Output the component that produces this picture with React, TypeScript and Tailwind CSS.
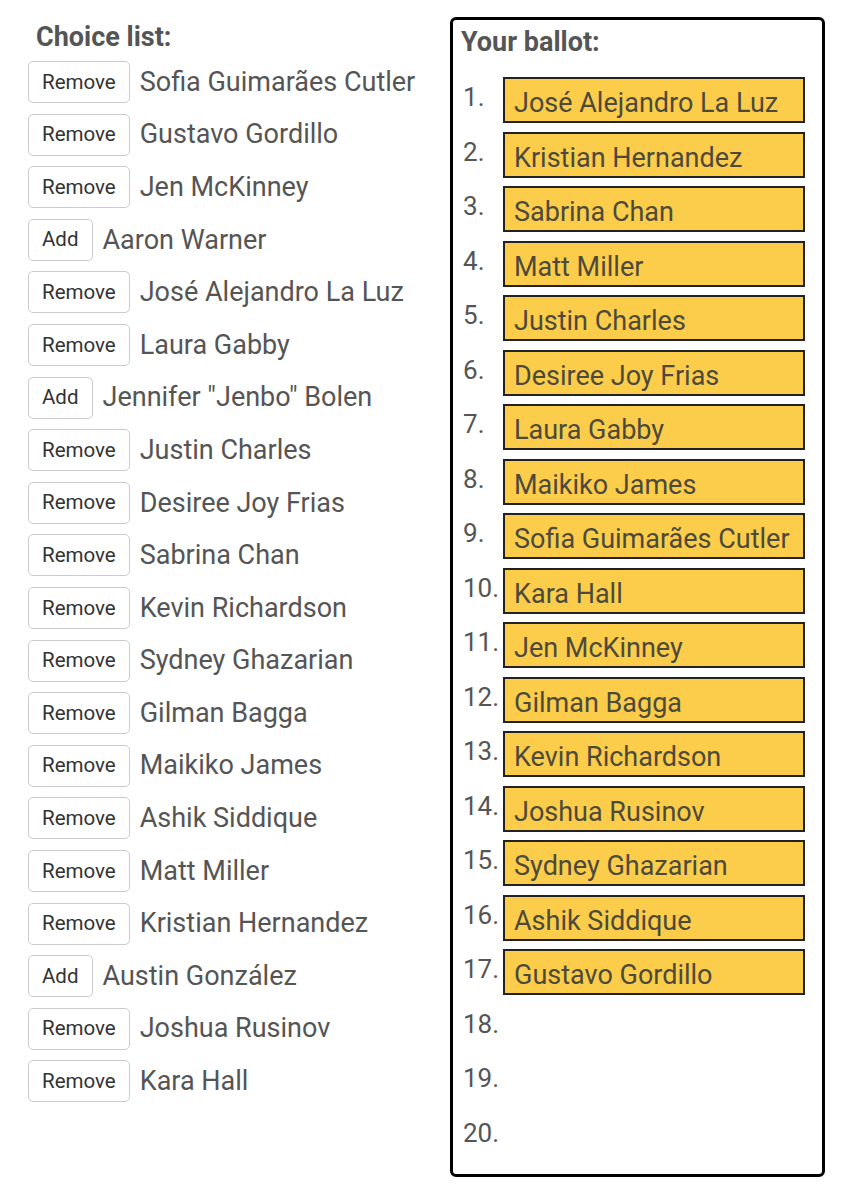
import React from 'react';

type Choice = { name: string; added: boolean };

const choices: Choice[] = [
  { name: 'Sofia Guimarães Cutler', added: true },
  { name: 'Gustavo Gordillo', added: true },
  { name: 'Jen McKinney', added: true },
  { name: 'Aaron Warner', added: false },
  { name: 'José Alejandro La Luz', added: true },
  { name: 'Laura Gabby', added: true },
  { name: 'Jennifer "Jenbo" Bolen', added: false },
  { name: 'Justin Charles', added: true },
  { name: 'Desiree Joy Frias', added: true },
  { name: 'Sabrina Chan', added: true },
  { name: 'Kevin Richardson', added: true },
  { name: 'Sydney Ghazarian', added: true },
  { name: 'Gilman Bagga', added: true },
  { name: 'Maikiko James', added: true },
  { name: 'Ashik Siddique', added: true },
  { name: 'Matt Miller', added: true },
  { name: 'Kristian Hernandez', added: true },
  { name: 'Austin González', added: false },
  { name: 'Joshua Rusinov', added: true },
  { name: 'Kara Hall', added: true },
];

const ballot: string[] = [
  'José Alejandro La Luz',
  'Kristian Hernandez',
  'Sabrina Chan',
  'Matt Miller',
  'Justin Charles',
  'Desiree Joy Frias',
  'Laura Gabby',
  'Maikiko James',
  'Sofia Guimarães Cutler',
  'Kara Hall',
  'Jen McKinney',
  'Gilman Bagga',
  'Kevin Richardson',
  'Joshua Rusinov',
  'Sydney Ghazarian',
  'Ashik Siddique',
  'Gustavo Gordillo',
];

const slots = Array.from({ length: 20 }, (_, i) => ballot[i] ?? null);

export default function App() {
  return (
    <div className="flex w-[848px] h-[1200px] bg-white text-[#555] font-['Roboto','Liberation_Sans',sans-serif]">
      {/* Choice list */}
      <div className="w-[450px] pl-[28px] pt-[21px]">
        <h2 className="pl-[8px] text-[27px] leading-[32px] font-bold">Choice list:</h2>
        <ul className="mt-[8px] flex flex-col gap-[10.6px]">
          {choices.map((c) => (
            <li key={c.name} className="flex items-center h-[42px]">
              <button className="h-[42px] px-[13px] rounded-[5px] border border-[#ccc] bg-white text-[20.5px] text-[#333]">
                {c.added ? 'Remove' : 'Add'}
              </button>
              <span className="ml-[10px] text-[27px]">{c.name}</span>
            </li>
          ))}
        </ul>
      </div>

      {/* Ballot */}
      <div className="mt-[17px] w-[375px] h-[1160px] border-[3px] border-black rounded-[6px] px-[8px] pt-[6px]">
        <h2 className="text-[27px] leading-[32px] font-bold">Your ballot:</h2>
        <ol className="mt-[19px] flex flex-col gap-[8.5px]">
          {slots.map((name, i) => (
            <li key={i} className="flex items-start h-[46px]">
              <span className="w-[42px] shrink-0 pl-[2px] pt-[6px] text-[26px] leading-[28px]">{i + 1}.</span>
              {name && (
                <div className="w-[302px] h-[46px] border-2 border-[#222] bg-[#fbcd4b] pl-[9px] pt-[9px] text-[27px] leading-[30px] text-[#4d4a3c]">
                  {name}
                </div>
              )}
            </li>
          ))}
        </ol>
      </div>
    </div>
  );
}
